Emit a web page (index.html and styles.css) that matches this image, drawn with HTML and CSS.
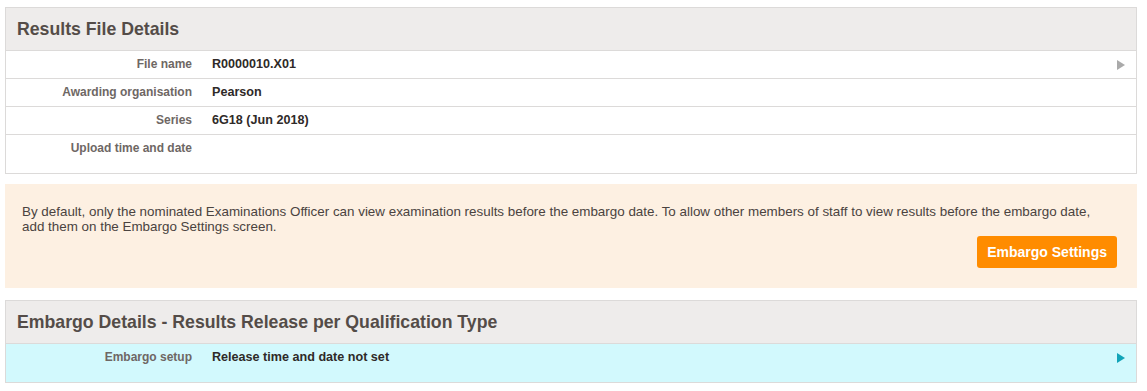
FILE: index.html
```html
<!DOCTYPE html>
<html lang="en">
<head>
    <meta charset="UTF-8">
    <title>Results File Details</title>
    <link rel="stylesheet" href="styles.css">
</head>
<body>
    <div class="panel">
        <div class="panel-head">Results File Details</div>
        <div class="row">
            <span class="label">File name</span>
            <span class="value">R0000010.X01</span>
            <span class="arrow grey"></span>
        </div>
        <div class="row">
            <span class="label">Awarding organisation</span>
            <span class="value">Pearson</span>
        </div>
        <div class="row">
            <span class="label">Series</span>
            <span class="value">6G18 (Jun 2018)</span>
        </div>
        <div class="row tall">
            <span class="label">Upload time and date</span>
            <span class="value"></span>
        </div>
    </div>

    <div class="notice">
        <p>By default, only the nominated Examinations Officer can view examination results before the embargo date. To allow other members of staff to view results before the embargo date, add them on the Embargo Settings screen.</p>
        <div class="actions">
            <button class="btn-orange">Embargo Settings</button>
        </div>
    </div>

    <div class="panel">
        <div class="panel-head">Embargo Details - Results Release per Qualification Type</div>
        <div class="row tall highlight">
            <span class="label">Embargo setup</span>
            <span class="value">Release time and date not set</span>
            <span class="arrow teal"></span>
        </div>
    </div>
</body>
</html>
```

FILE: styles.css
```css
body {
    font-family: "Liberation Sans", Arial, sans-serif;
    margin: 0;
    padding: 7px 10px 0 5px;
    background-color: #fff;
    color: #4a4340;
}
.panel {
    border: 1px solid #dcdad9;
}
.panel-head {
    background-color: #eeeceb;
    height: 42px;
    line-height: 42px;
    padding-left: 11px;
    font-size: 17.7px;
    font-weight: bold;
    color: #544c48;
}
.row {
    display: flex;
    align-items: flex-start;
    height: 27px;
    border-top: 1px solid #dcdad9;
    font-size: 12px;
    font-weight: bold;
    line-height: 27px;
    position: relative;
}
.row.tall {
    height: 38px;
}
.row.highlight {
    background-color: #d2f9fd;
}
.label {
    width: 186px;
    text-align: right;
    color: #6e6764;
}
.value {
    margin-left: 20px;
    font-size: 12.6px;
    color: #2f2a28;
}
.arrow {
    position: absolute;
    right: 11px;
    top: 9px;
    width: 0;
    height: 0;
    border-top: 5px solid transparent;
    border-bottom: 5px solid transparent;
    border-left: 8px solid #aaa;
}
.arrow.teal {
    border-left-color: #12a4b8;
}
.notice {
    margin: 10px 0 12px;
    background-color: #fdf0e2;
    padding: 20px 20px 20px 17px;
}
.notice p {
    margin: 0 14px 0 0;
    font-size: 13.4px;
    line-height: 15px;
    color: #4a4340;
}
.actions {
    display: flex;
    justify-content: flex-end;
    margin-top: 2px;
}
.btn-orange {
    background-color: #ff8c00;
    color: #fff;
    border: none;
    border-radius: 3px;
    height: 32px;
    padding: 0 10px;
    font-family: inherit;
    font-size: 14px;
    font-weight: bold;
    cursor: pointer;
}
```
